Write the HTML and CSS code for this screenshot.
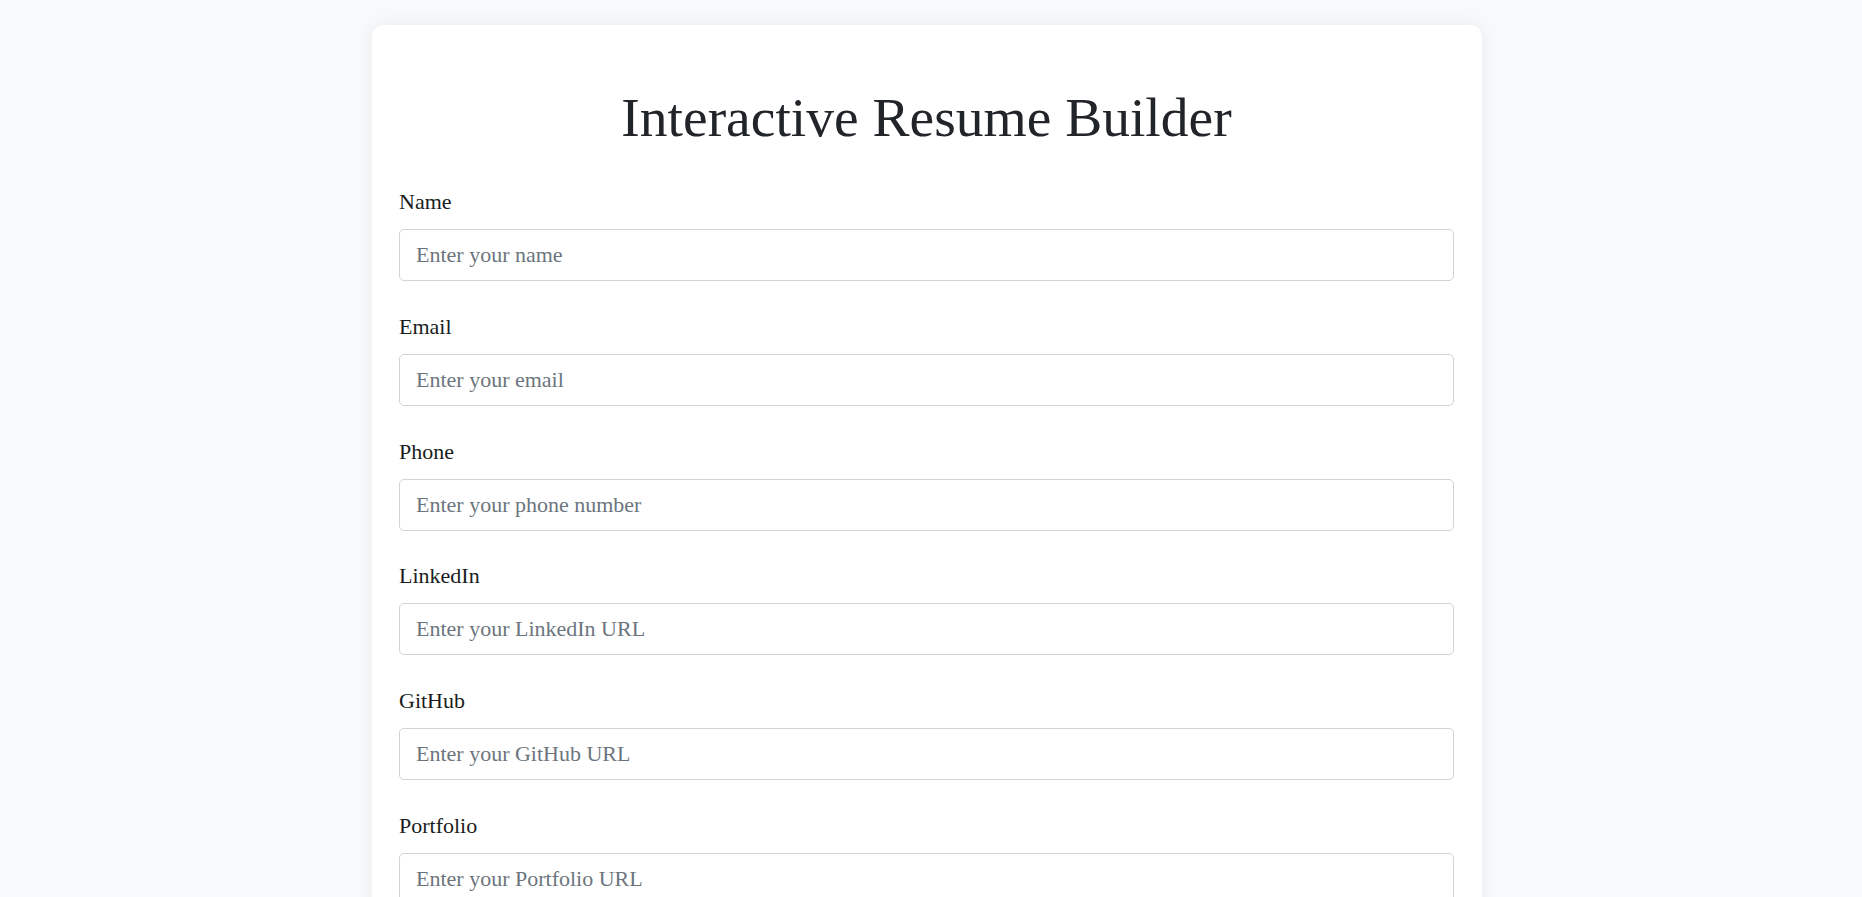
FILE: index.html
```html
<!DOCTYPE html>
<html lang="en">
<head>
<meta charset="utf-8">
<title>Interactive Resume Builder</title>
<link rel="stylesheet" href="styles.css">
</head>
<body>
  <main class="card">
    <h1 class="title">Interactive Resume Builder</h1>
    <form class="form">
      <div class="field">
        <label class="label" for="name">Name</label>
        <input class="input" id="name" type="text" placeholder="Enter your name">
      </div>
      <div class="field">
        <label class="label" for="email">Email</label>
        <input class="input" id="email" type="email" placeholder="Enter your email">
      </div>
      <div class="field">
        <label class="label" for="phone">Phone</label>
        <input class="input" id="phone" type="tel" placeholder="Enter your phone number">
      </div>
      <div class="field">
        <label class="label" for="linkedin">LinkedIn</label>
        <input class="input" id="linkedin" type="url" placeholder="Enter your LinkedIn URL">
      </div>
      <div class="field">
        <label class="label" for="github">GitHub</label>
        <input class="input" id="github" type="url" placeholder="Enter your GitHub URL">
      </div>
      <div class="field">
        <label class="label" for="portfolio">Portfolio</label>
        <input class="input" id="portfolio" type="url" placeholder="Enter your Portfolio URL">
      </div>
    </form>
  </main>
</body>
</html>
```
FILE: styles.css
```css
html, body {
  margin: 0;
  background: #f8f9fa;
}

body {
  padding: 25px 8px 0 0;
  font-family: "Liberation Serif", "Times New Roman", serif;
  color: #212529;
}

.card {
  box-sizing: border-box;
  max-width: 1110px;
  margin: 0 auto;
  padding: 28px 28px 28px 27px;
  background: #ffffff;
  border-radius: 12px;
  box-shadow: 0 0 18px rgba(0, 0, 0, 0.06);
}

.title {
  margin: 32px 0 38px;
  font-size: 55.5px;
  line-height: 66px;
  font-weight: normal;
  text-align: center;
  color: #212529;
}

.form {
  display: flex;
  flex-direction: column;
  gap: 32.8px;
}

.field {
  display: flex;
  flex-direction: column;
  gap: 15px;
}

.label {
  font-size: 22px;
  line-height: 25px;
  color: #1a1d20;
}

.input {
  box-sizing: border-box;
  width: 100%;
  height: 52px;
  padding: 0 16px;
  border: 1px solid #ced4da;
  border-radius: 5px;
  font-family: "Liberation Serif", "Times New Roman", serif;
  font-size: 22px;
  color: #212529;
  background: #ffffff;
}

.input::placeholder {
  color: #6c757d;
}
```
